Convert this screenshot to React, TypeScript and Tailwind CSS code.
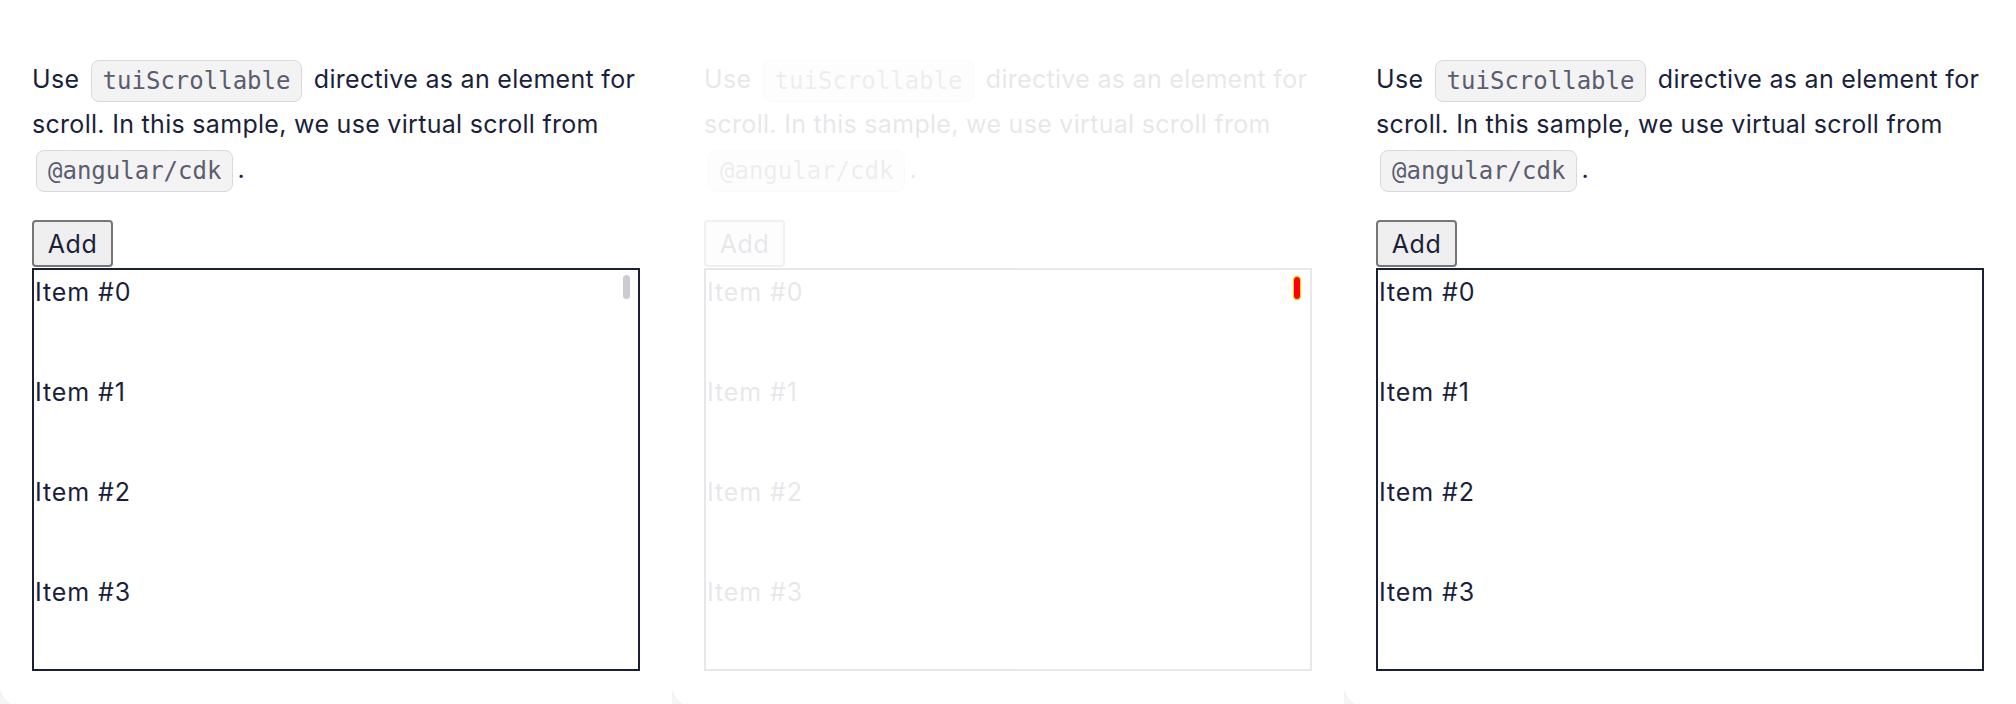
const items = [0, 1, 2, 3];

function Code({ children }: { children: React.ReactNode }) {
  return (
    <code className="mx-1 inline-block h-[42px] rounded-lg border border-[#d9d9dd] bg-[#f3f3f4] px-[11px] align-middle font-['DejaVu_Sans_Mono',monospace] text-[24px] leading-[40px] tracking-normal text-[#5b5d6e]">
      {children}
    </code>
  );
}

function Demo({ thumb }: { thumb?: boolean }) {
  return (
    <>
      <p className="leading-[45px] tracking-[0.3px]">
        Use <Code>tuiScrollable</Code> directive as an element for
        <br />
        scroll. In this sample, we use virtual scroll from
        <br />
        <Code>@angular/cdk</Code>.
      </p>
      <button
        type="button"
        className="mt-[28px] block h-[47px] w-[81px] rounded border-2 border-[#767676] bg-[#efefef] text-[25px] leading-9 tracking-[0.6px] text-[#1b1f3b]"
      >
        Add
      </button>
      <div className="relative mt-[1px] h-[403px] overflow-hidden border-2 border-[#1b1f3b]">
        {items.map((i) => (
          <div key={i} className="h-[100px] pt-[3px] pl-px text-[25px] leading-[38px] tracking-[0.9px]">
            Item #{i}
          </div>
        ))}
        {thumb && (
          <div className="absolute top-[5px] right-[8px] h-[24px] w-[7px] rounded-full bg-[#cbcbd1]" />
        )}
      </div>
    </>
  );
}

export default function App() {
  return (
    <div className="h-[704px] overflow-hidden bg-[#f4f4f5] font-['Inter','Noto_Sans',sans-serif] text-[25px] text-[#1b1f3b]">
      <div className="flex">
        <section className="h-[708px] w-[672px] rounded-bl-3xl bg-white px-8 pt-[57px]">
          <Demo thumb />
        </section>
        <section className="relative h-[708px] w-[672px] rounded-bl-3xl bg-white px-8 pt-[57px]">
          <div className="opacity-10">
            <Demo />
          </div>
          <div className="absolute top-[276px] left-[621px] h-[24px] w-[8px] rounded-full border border-[#ffd400] bg-[#ff0000]" />
        </section>
        <section className="h-[708px] w-[672px] rounded-bl-3xl bg-white px-8 pt-[57px]">
          <Demo />
        </section>
      </div>
    </div>
  );
}
